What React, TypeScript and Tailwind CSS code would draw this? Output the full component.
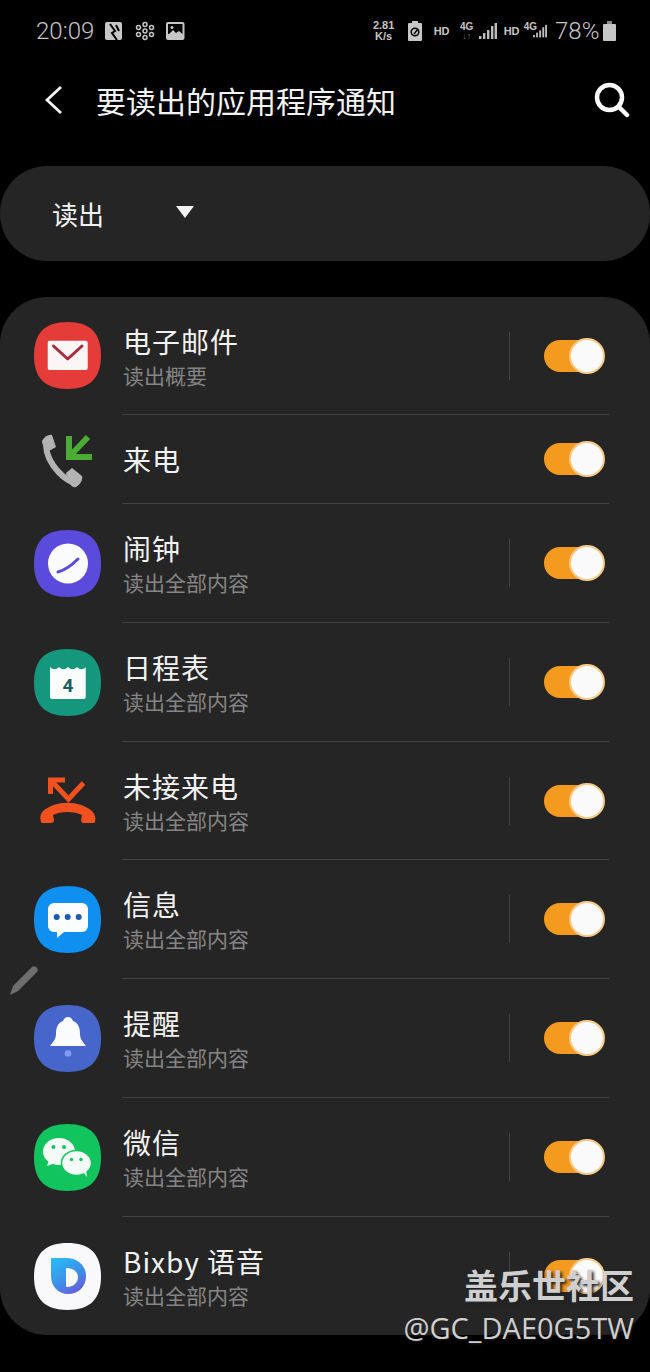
import type { ReactNode } from "react";

const squircle = "M33.5 0C56 0 67 11 67 33.5S56 67 33.5 67 0 56 0 33.5 11 0 33.5 0Z";

function AppIcon({ color, children }: { color?: string; children: ReactNode }) {
  return (
    <svg width="67" height="67" viewBox="0 0 67 67" className="shrink-0">
      {color && <path d={squircle} fill={color} />}
      {children}
    </svg>
  );
}

const MailIcon = () => (
  <AppIcon color="#e53c39">
    <rect x="13.7" y="18.7" width="40" height="29.3" rx="2" fill="#fbf6f6" />
    <path d="M19.5 24l14.2 13L48 24" fill="none" stroke="#a92a38" strokeWidth="3" strokeLinecap="round" strokeLinejoin="round" />
  </AppIcon>
);

const IncomingIcon = () => (
  <AppIcon>
    <path d="M35 10v21h23M35 31l19-20" fill="none" stroke="#4bac35" strokeWidth="6" />
    <path d="M13 15C9 30 24 51 42 58" fill="none" stroke="#b3b3b3" strokeWidth="6" />
    <path d="M8 15c3-5 7-7 10-6l4 12-7 4c-4-2-7-6-7-10Z" fill="#b3b3b3" />
    <path d="M32 47l6-5 10 8c1 3-1 8-6 11-4 1-7-2-10-14Z" fill="#b3b3b3" />
  </AppIcon>
);

const AlarmIcon = () => (
  <AppIcon color="#5b4bdc">
    <circle cx="34" cy="33.5" r="20" fill="#fbfaff" />
    <path d="M24 42c7-2 13-6 20-13" fill="none" stroke="#5b4bdc" strokeWidth="3" strokeLinecap="round" />
  </AppIcon>
);

const CalendarIcon = () => (
  <AppIcon color="#14977c">
    <path d="M16 18c3 3 6 3 9 0 3 3 6 3 9 0 3 3 6 3 9 0 3 3 6 3 8.700 0v30a2 2 0 0 1-2 2H18a2 2 0 0 1-2-2Z" fill="#fbfdfc" />
    <text x="34" y="43" textAnchor="middle" fontSize="19" fontWeight="700" fontFamily="Roboto, sans-serif" fill="#195f5c">
      4
    </text>
  </AppIcon>
);

const MissedIcon = () => (
  <AppIcon>
    <path d="M31 13H16.500V27M16.500 13l18 19 15-16" fill="none" stroke="#f1501f" strokeWidth="5" />
    <path d="M7 55c-1-4-1-8 2-11 13-11 36-11 49 0 3 3 4 7 3 11l-1 1H50c-2 0-3-1-3-3l1-5c-8-4-21-4-29 0l1 5c0 2-1 3-3 3H8Z" fill="#f1501f" />
  </AppIcon>
);

const MessageIcon = () => (
  <AppIcon color="#0f90f0">
    <path d="M20 17h28a6 6 0 0 1 6 6v17a6 6 0 0 1-6 6H30l-7 6v-6h-3a6 6 0 0 1-6-6V23a6 6 0 0 1 6-6Z" fill="#fbfdff" />
    <circle cx="22.700" cy="31" r="3" fill="#1a5db0" />
    <circle cx="33.700" cy="31" r="3" fill="#1a5db0" />
    <circle cx="44.700" cy="31" r="3" fill="#1a5db0" />
  </AppIcon>
);

const BellIcon = () => (
  <AppIcon color="#4766cc">
    <path d="M34 12c3 0 4 2 5 4 6 2 7 8 7 13 0 5 3 8 6 12H16c3-4 6-7 6-12 0-5 1-11 7-13 1-2 2-4 5-4Z" fill="#fbfcff" />
    <circle cx="34" cy="48.500" r="3.300" fill="#7f9df0" />
  </AppIcon>
);

const WeChatIcon = () => (
  <AppIcon color="#12c45e">
    <ellipse cx="25" cy="27.500" rx="16" ry="13.500" fill="#f4fbf6" />
    <path d="M15 36l-2 6 8-3Z" fill="#f4fbf6" />
    <circle cx="19.500" cy="23" r="2" fill="#12c45e" />
    <circle cx="30" cy="23" r="2" fill="#12c45e" />
    <ellipse cx="42.500" cy="39" rx="15" ry="12.500" fill="#f4fbf6" stroke="#12c45e" strokeWidth="1.500" />
    <path d="M49 48l4 5-1-7Z" fill="#f4fbf6" />
    <circle cx="37.500" cy="35.500" r="1.700" fill="#12c45e" />
    <circle cx="47" cy="35.500" r="1.700" fill="#12c45e" />
  </AppIcon>
);

const BixbyIcon = () => (
  <AppIcon color="#f9f9fb">
    <defs>
      <linearGradient id="bixby" x1="0.100" y1="0" x2="0.700" y2="1">
        <stop offset="0" stopColor="#27bdf6" />
        <stop offset="0.600" stopColor="#3f8ee8" />
        <stop offset="1" stopColor="#6a5ad8" />
      </linearGradient>
    </defs>
    <path d="M17 15h15c12 0 20 8 20 18 0 11-8 18-18 18-10 0-17-8-17-18Z" fill="url(#bixby)" />
    <path d="M32 25c7 0 12 4 12 9 0 6-5 10-11 10-1 0-1-1-1-2Z" fill="#f9f9fb" />
  </AppIcon>
);

function Toggle() {
  return (
    <div className="w-[60px] h-8 rounded-full bg-[#f39a1f] flex items-center justify-end">
      <div className="w-[36px] h-[36px] rounded-full bg-[#fbfafa] border-2 border-[#f7c987] shrink-0 -mr-px"></div>
    </div>
  );
}

const rows = [
  { icon: <MailIcon />, title: "电子邮件", sub: "读出概要", h: "h-[117px]" },
  { icon: <IncomingIcon />, title: "来电", sub: "", h: "h-[88px]" },
  { icon: <AlarmIcon />, title: "闹钟", sub: "读出全部内容", h: "h-[118px]" },
  { icon: <CalendarIcon />, title: "日程表", sub: "读出全部内容", h: "h-[118px]" },
  { icon: <MissedIcon />, title: "未接来电", sub: "读出全部内容", h: "h-[117px]" },
  { icon: <MessageIcon />, title: "信息", sub: "读出全部内容", h: "h-[118px]" },
  { icon: <BellIcon />, title: "提醒", sub: "读出全部内容", h: "h-[118px]" },
  { icon: <WeChatIcon />, title: "微信", sub: "读出全部内容", h: "h-[118px]" },
  { icon: <BixbyIcon />, title: "Bixby 语音", sub: "读出全部内容", h: "h-[118px]" },
];

function Signal({ w = 18 }: { w?: number }) {
  return (
    <svg width={w} height="17" viewBox="0 0 18 17" fill="#bdbdbd">
      <rect x="0" y="13" width="2.400" height="3" />
      <rect x="4" y="10" width="2.400" height="6" />
      <rect x="8" y="7" width="2.400" height="9" />
      <rect x="12" y="3" width="2.400" height="13" />
      <rect x="15.600" y="0" width="2.400" height="16" />
    </svg>
  );
}

function StatusBar() {
  return (
    <div className="h-[62px] flex items-center justify-between pl-[36px] pr-[34px] text-[#c6c6c6]">
      <div className="flex items-center">
        <span className="text-[24px] font-light font-['Roboto'] w-[69px] leading-none">20:09</span>
        <svg width="19" height="18" viewBox="0 0 19 18" className="mr-[11px]">
          <rect x="0" y="0" width="17" height="18" rx="2" fill="#c6c6c6" />
          <path d="M5 2l5 7-3 2 5 7M11 3l3 6" fill="none" stroke="#000" strokeWidth="2" />
        </svg>
        <svg width="20" height="20" viewBox="0 0 20 20" className="mr-[11px]" fill="none" stroke="#c6c6c6" strokeWidth="1.500">
          <circle cx="10" cy="10" r="2" />
          <circle cx="10" cy="3.500" r="2" />
          <circle cx="10" cy="16.500" r="2" />
          <circle cx="3.500" cy="6.500" r="2" />
          <circle cx="16.500" cy="6.500" r="2" />
          <circle cx="3.500" cy="13.500" r="2" />
          <circle cx="16.500" cy="13.500" r="2" />
        </svg>
        <svg width="19" height="18" viewBox="0 0 19 18">
          <rect x="0" y="0" width="18.500" height="18" rx="2" fill="#c6c6c6" />
          <rect x="2" y="2" width="14.500" height="10" fill="#000" />
          <circle cx="6" cy="5.500" r="1.500" fill="#c6c6c6" />
          <path d="M2 13l5-5 3 3 3-2 3.500 3v2H2Z" fill="#c6c6c6" />
        </svg>
      </div>
      <div className="flex items-center font-['Liberation_Sans']">
        <div className="flex flex-col items-center w-[26px] text-[11px] leading-[11px] font-bold mr-[11px]">
          <span>2.81</span>
          <span>K/s</span>
        </div>
        <svg width="14" height="20" viewBox="0 0 14 20" className="mr-[12px]">
          <path d="M4 0h6v2h3a1 1 0 0 1 1 1v16a1 1 0 0 1-1 1H1a1 1 0 0 1-1-1V3a1 1 0 0 1 1-1h3Z" fill="#c6c6c6" />
          <circle cx="7" cy="11" r="3.800" fill="none" stroke="#000" strokeWidth="1.500" />
          <path d="M6 13l4-5" stroke="#000" strokeWidth="1.500" />
        </svg>
        <span className="text-[11px] font-bold w-[26px]">HD</span>
        <div className="flex flex-col items-center w-[14px] mr-[5px]">
          <span className="text-[10px] leading-[10px] font-bold">4G</span>
          <span className="text-[9px] leading-[9px] font-bold text-[#777]">↓↑</span>
        </div>
        <Signal />
        <span className="text-[11px] font-bold w-[20px] ml-[7px]">HD</span>
        <div className="flex items-end h-[18px] mr-[8px]">
          <span className="text-[10px] leading-[10px] font-bold self-start -mr-[4px]">4G</span>
          <Signal w={14} />
        </div>
        <span className="text-[24px] font-light font-['Roboto'] leading-none w-[48px]">78%</span>
        <svg width="13" height="20" viewBox="0 0 13 20">
          <rect x="4" y="0" width="5" height="3" fill="#8a8a8a" />
          <rect x="0" y="3" width="13" height="17" rx="1" fill="#c6c6c6" />
        </svg>
      </div>
    </div>
  );
}

export default function App() {
  return (
    <div className="relative w-[650px] h-[1372px] overflow-hidden bg-black font-['Noto_Sans_CJK_SC','Noto_Sans',sans-serif]">
      <StatusBar />

      <div className="h-[76px] flex items-center justify-between pl-[44px] pr-[20px]">
        <div className="flex items-center">
          <svg width="20" height="30" viewBox="0 0 20 30" className="mr-[32px]">
            <path d="M17 2L3 15l14 13" fill="none" stroke="#f2f2f2" strokeWidth="2.800" />
          </svg>
          <h1 className="text-[30px] leading-none text-[#f2f2f2] font-normal">要读出的应用程序通知</h1>
        </div>
        <svg width="36" height="36" viewBox="0 0 36 36" fill="none" stroke="#fafafa" strokeWidth="4.500">
          <circle cx="15.500" cy="15.500" r="12.500" />
          <path d="M25 25l8 8" strokeLinecap="round" />
        </svg>
      </div>

      <div className="mt-[28px] h-[95px] rounded-[47px] bg-[#252525] flex items-center pl-[52px]">
        <span className="text-[26px] text-[#f2f2f2] leading-none">读出</span>
        <svg width="18" height="12" viewBox="0 0 18 12" className="ml-[72px] -mt-[4px]">
          <path d="M0 0h18L9 12Z" fill="#f2f2f2" />
        </svg>
      </div>

      <div className="mt-[36px] rounded-[47px] bg-[#252525]">
        {rows.map((row, i) => (
          <div key={row.title}>
            {i > 0 && <div className="h-px ml-[122px] mr-[41px] bg-[#434343]"></div>}
            <div className={`${row.h} flex items-center pl-[34px] pr-[46px]`}>
              {row.icon}
              <div className="flex-1 ml-[22px] flex flex-col">
                <span className="text-[28px] leading-[36px] tracking-[1px] text-[#f2f2f2]">{row.title}</span>
                {row.sub && <span className="text-[21px] leading-[28px] text-[#858585] mt-[2px]">{row.sub}</span>}
              </div>
              {row.sub && <div className="w-px h-[48px] bg-[#434343] mr-[34px]"></div>}
              <Toggle />
            </div>
          </div>
        ))}
      </div>

      <svg width="32" height="34" viewBox="0 0 32 34" className="absolute left-[8px] top-[963px]">
        <path d="M2 32l3-9L24 4c1-1 3-1 4 0l1 1c1 1 1 3 0 4L10 28Z" fill="#6e6e6e" />
      </svg>

      <div className="absolute right-[16px] top-[1264px] flex flex-col items-end text-[#cfcfcf]">
        <span className="text-[34px] leading-[42px] font-bold [text-shadow:2px_2px_3px_#222]">盖乐世社区</span>
        <span className="text-[29px] leading-[40px] mt-[2px] font-['Open_Sans'] [text-shadow:1px_1px_2px_#222]">@GC_DAE0G5TW</span>
      </div>
    </div>
  );
}
